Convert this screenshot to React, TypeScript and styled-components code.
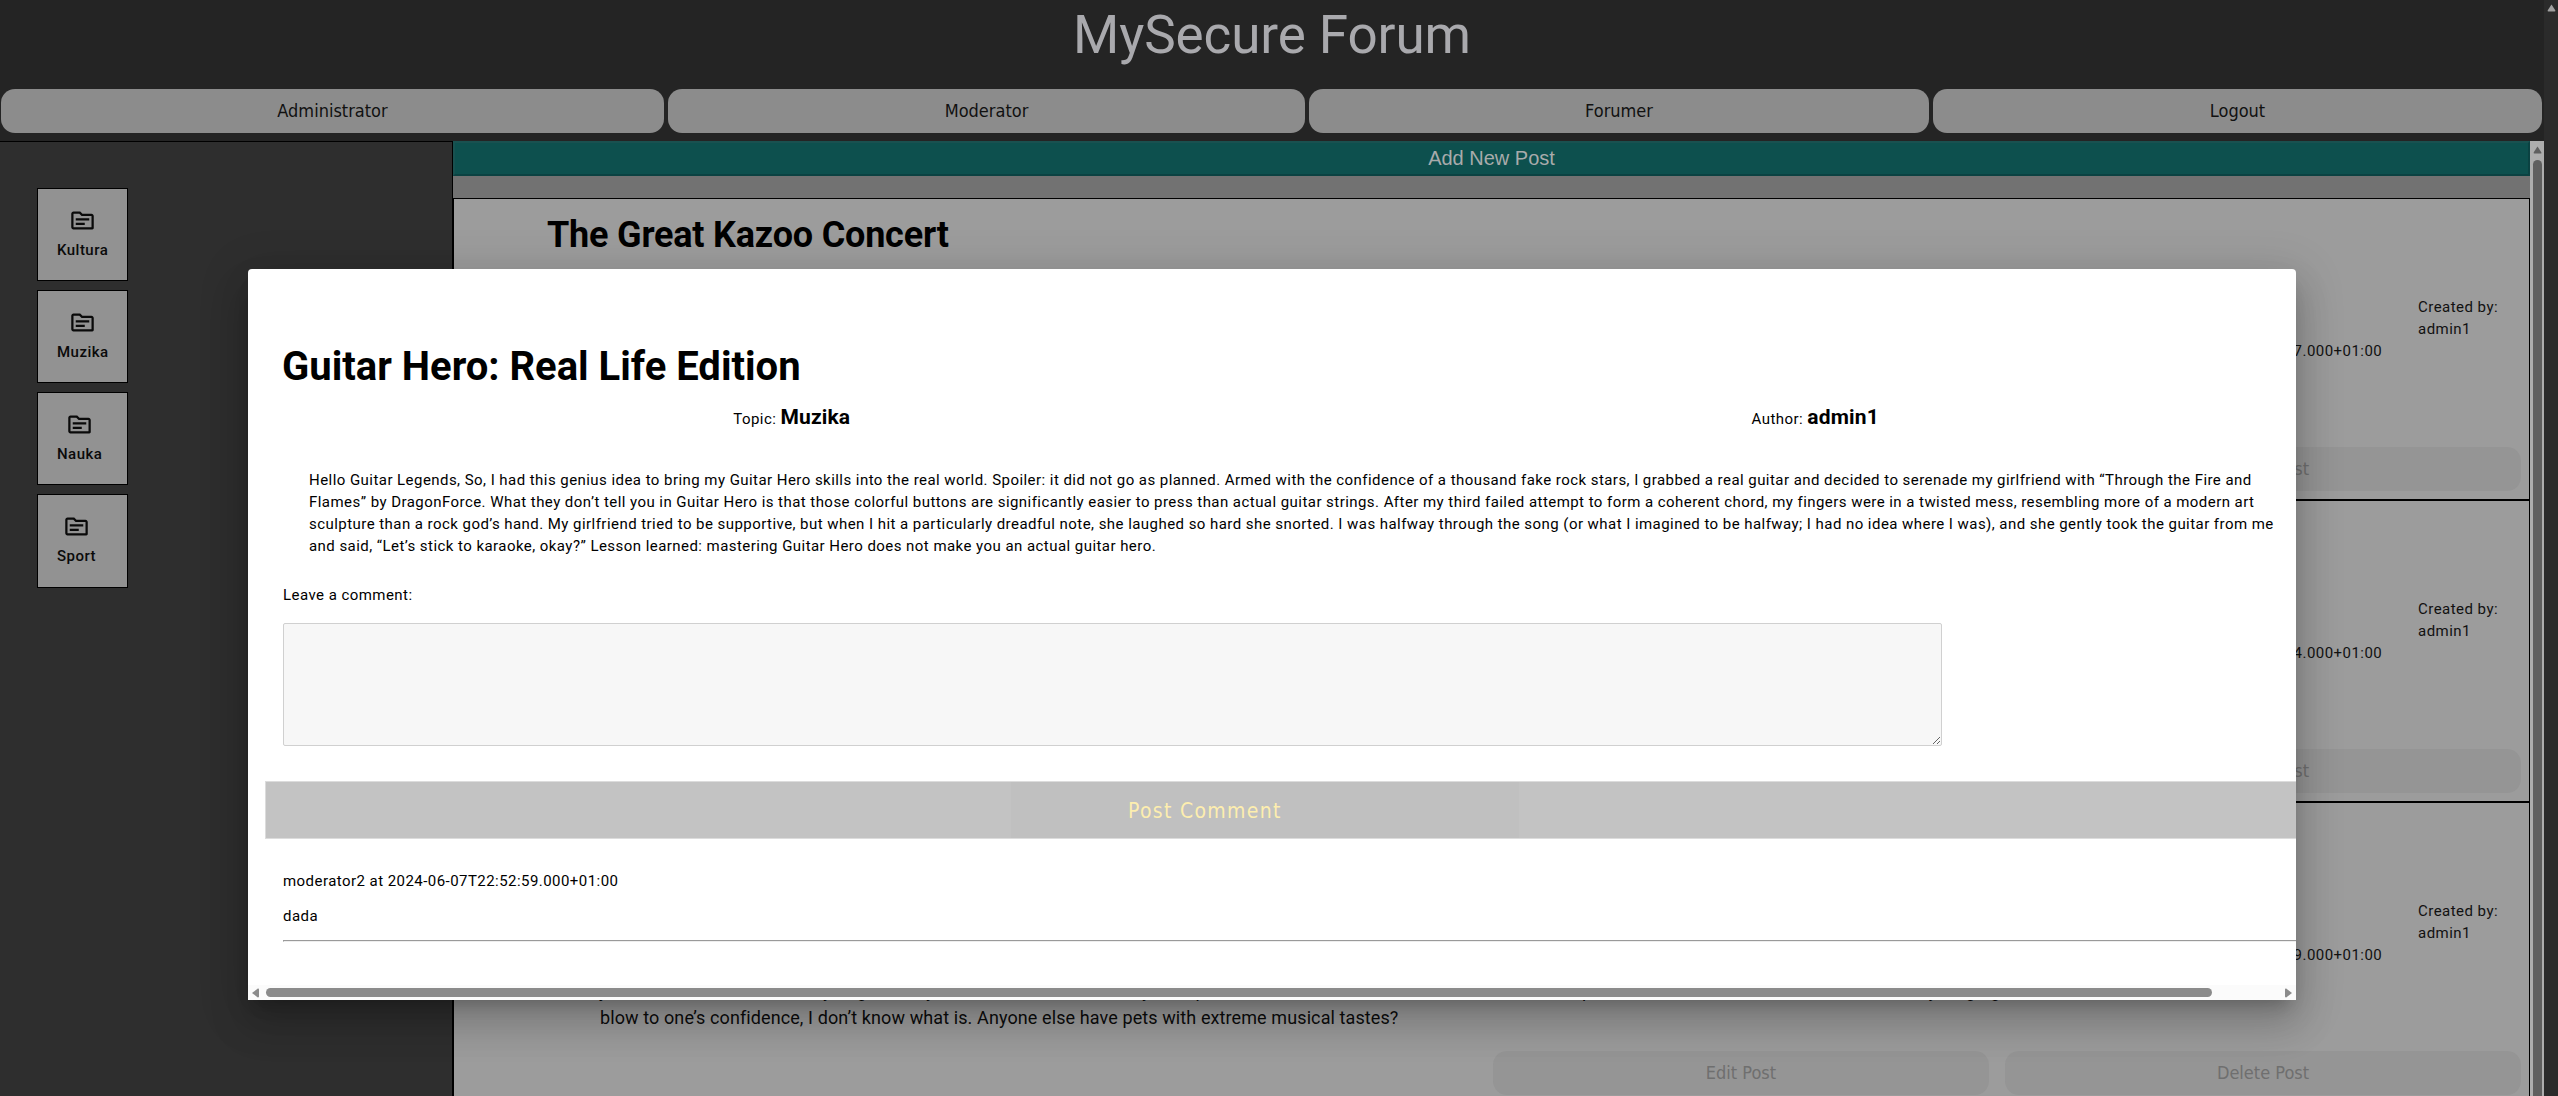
import React from 'react';
import styled, { createGlobalStyle } from 'styled-components';
import { MdOutlineTopic } from 'react-icons/md';

const GlobalStyle = createGlobalStyle`
  *, *::before, *::after { box-sizing: border-box; }
  body {
    margin: 0;
    background: #242424;
    color: #000;
    font-family: Roboto, "Liberation Sans", sans-serif;
    overflow: hidden;
  }
  button { border: 0; padding: 0; margin: 0; }
`;

const navFont = '"DejaVu Sans Condensed", "DejaVu Sans", "Noto Sans", sans-serif';

const Screen = styled.div`
  position: relative;
  display: flex;
  width: 2558px;
  height: 1096px;
  overflow: hidden;
`;

const Page = styled.div`
  width: 2544px;
  display: flex;
  flex-direction: column;
`;

const WindowScroll = styled.div`
  width: 14px;
  background: #2b2b2b;
  padding: 4px 0 0 3px;
`;

const Header = styled.header`
  height: 141px;
  flex: none;
  background: #242424;
  padding-top: 4px;
`;

const SiteTitle = styled.h1`
  margin: 0 0 23px;
  height: 62px;
  line-height: 62px;
  font-size: 53px;
  font-weight: 400;
  letter-spacing: -0.1px;
  text-align: center;
  color: #a9a9ad;
`;

const Nav = styled.nav`
  display: grid;
  grid-template-columns: 663px 637px 620px 609px;
  column-gap: 4px;
  padding-left: 1px;
`;

const NavButton = styled.button`
  height: 44px;
  padding-bottom: 1px;
  border-radius: 14px;
  background: #8c8c8c;
  color: #111;
  font-family: ${navFont};
  font-size: 18px;
  font-stretch: condensed;
`;

const Main = styled.div`
  flex: 1;
  min-height: 0;
  display: flex;
`;

const Sidebar = styled.aside`
  width: 453px;
  flex: none;
  background: #2e2e2e;
  border-top: 1px solid #000;
  border-right: 1px solid #000;
  padding: 45.6px 0 0 37px;
`;

const TopicCard = styled.div`
  width: 91px;
  height: 93.4px;
  margin-bottom: 8.8px;
  border: 1px solid #000;
  background: #929292;
  padding: 18px 0 0 19px;
`;

const TopicInner = styled.div`
  display: inline-flex;
  flex-direction: column;
  align-items: center;
  font-size: 15px;
  font-weight: 500;
  letter-spacing: 0.47px;
  line-height: 22px;
  color: #0a0a0a;
  gap: 5px;
  svg { display: block; }
`;

const Feed = styled.main`
  width: 2077px;
  flex: none;
  background: #727272;
`;

const AddPost = styled.button`
  display: block;
  width: 100%;
  height: 35px;
  margin-bottom: 22px;
  border: 2px solid;
  border-color: #195150 #0b4242 #0b4242 #195150;
  background: #0d504e;
  color: #a8abab;
  font: 20px "Liberation Sans", Arial, sans-serif;
`;

const Post = styled.article`
  height: 302px;
  border: 1px solid #000;
  background: #9c9c9c;
  display: flex;
  flex-direction: column;
`;

const PostTitle = styled.h2`
  margin: 14px 0 0 93px;
  height: 44px;
  font-size: 36px;
  line-height: 44px;
  font-weight: 700;
  letter-spacing: -0.2px;
`;

const PostRow = styled.div`
  flex: 1;
  min-height: 0;
  display: flex;
`;

const PostBody = styled.p`
  margin: 116px 0 0 146px;
  flex: 1;
  min-width: 0;
  font-size: 18px;
  line-height: 27px;
  letter-spacing: 0.1px;
  white-space: pre;
  color: #0c0c0c;
`;

const PostMeta = styled.div<{ $width: number; $top: number }>`
  width: ${p => p.$width}px;
  margin-top: ${p => p.$top}px;
  flex: none;
  font-size: 15px;
  line-height: 22px;
  letter-spacing: 0.47px;
  white-space: pre-line;
  color: #111;
`;

const PostActions = styled.div`
  display: grid;
  grid-template-columns: 496px 516px;
  justify-content: end;
  gap: 16px;
  margin: 0 8px 8px 0;
`;

const GhostButton = styled(NavButton)`
  background: #959595;
  color: #6f6f6f;
`;

const FeedScroll = styled.div`
  width: 14px;
  background: #adadad;
  display: flex;
  flex-direction: column;
  align-items: center;
  padding-top: 5px;
  gap: 6px;
`;

const FeedThumb = styled.div`
  width: 9px;
  flex: 1;
  border-radius: 5px 5px 0 0;
  background: #5f5f5f;
`;

const Arrow = styled.svg`
  display: block;
  flex: none;
`;

const Dialog = styled.section`
  position: absolute;
  left: 248px;
  top: 269px;
  width: 2048px;
  height: 731px;
  display: flex;
  flex-direction: column;
  background: #fff;
  border-radius: 4px 4px 0 0;
  overflow: hidden;
  box-shadow:
    0 11px 15px -7px rgba(0, 0, 0, 0.2),
    0 24px 38px 3px rgba(0, 0, 0, 0.14),
    0 9px 46px 8px rgba(0, 0, 0, 0.12);
`;

const DialogContent = styled.div`
  flex: 1;
  width: 2079px;
  padding: 74px 0 0 35px;
  font-size: 15px;
  line-height: 22px;
  letter-spacing: 0.45px;
`;

const DialogTitle = styled.h1`
  margin: 0 0 0 -1px;
  height: 48px;
  line-height: 48px;
  font-size: 40px;
  font-weight: 700;
  letter-spacing: 0;
`;

const Facts = styled.div`
  display: grid;
  grid-template-columns: 1fr 1fr;
  margin: 8px 0 34px -3px;
  height: 36px;
  line-height: 36px;
  text-align: center;
`;

const Strong = styled.strong`
  font-size: 21px;
  font-weight: 700;
  letter-spacing: 0.15px;
`;

const Story = styled.p`
  margin: 0 0 27px 26px;
  white-space: pre;
`;

const CommentLabel = styled.label`
  display: block;
  margin-bottom: 17px;
`;

const CommentBox = styled.textarea`
  display: block;
  width: 1659px;
  height: 123px;
  border: 1px solid #d0d0d0;
  border-radius: 2px;
  background: #f7f7f7;
  margin-bottom: 35px;
`;

const SubmitButton = styled.button`
  display: block;
  width: 2062px;
  height: 58px;
  margin: 0 0 31px -18px;
  padding: 2px 0 0 862px;
  border: 1px solid #dcdcdc;
  background: linear-gradient(90deg, #c3c3c3 745px, #c0c0c0 745px, #c0c0c0 1253px, #c3c3c3 1253px);
  color: #fdeeaf;
  text-align: left;
  font-family: ${navFont};
  font-size: 21px;
  font-stretch: condensed;
  letter-spacing: 1.3px;
`;

const CommentText = styled.p`
  margin: 0 0 13px;
`;

const Rule = styled.hr`
  margin: 0;
  height: 2px;
  border: 1px solid;
  border-color: #9a9a9a #eee #eee #9a9a9a;
`;

const DialogScroll = styled.div`
  height: 15px;
  background: #fbfbfb;
  display: flex;
  align-items: center;
  padding: 0 4px;
`;

const DialogThumb = styled.div`
  width: 1946px;
  height: 9px;
  margin: 0 auto 0 7px;
  border-radius: 5px;
  background: #8b8b8b;
`;

const topics = ['Kultura', 'Muzika', 'Nauka', 'Sport'];

const story = [
  'Hello Guitar Legends, So, I had this genius idea to bring my Guitar Hero skills into the real world. Spoiler: it did not go as planned. Armed with the confidence of a thousand fake rock stars, I grabbed a real guitar and decided to serenade my girlfriend with “Through the Fire and',
  'Flames” by DragonForce. What they don’t tell you in Guitar Hero is that those colorful buttons are significantly easier to press than actual guitar strings. After my third failed attempt to form a coherent chord, my fingers were in a twisted mess, resembling more of a modern art',
  'sculpture than a rock god’s hand. My girlfriend tried to be supportive, but when I hit a particularly dreadful note, she laughed so hard she snorted. I was halfway through the song (or what I imagined to be halfway; I had no idea where I was), and she gently took the guitar from me',
  'and said, “Let’s stick to karaoke, okay?” Lesson learned: mastering Guitar Hero does not make you an actual guitar hero.',
].join('\n');

const petBody = [
  'just when I hit the chorus my dog actually hid behind the kitchen. My cat opened the window and ran outside to call for help the moment he heard the first notes of my singing. If that isn’t a',
  'blow to one’s confidence, I don’t know what is. Anyone else have pets with extreme musical tastes?',
].join('\n');

const posts = [
  { title: 'The Great Kazoo Concert', date: '2024-06-07T22:50:17.000+01:00', body: '' },
  { title: '', date: '2024-06-07T22:50:54.000+01:00', body: '' },
  { title: '', date: '2024-06-07T22:51:39.000+01:00', body: petBody },
];

const UpArrow = ({ fill }: { fill: string }) => (
  <Arrow width={9} height={8} viewBox="0 0 9 8">
    <path d="M4.5 0.5 L8.4 6.6 Q8.6 7.5 7.6 7.5 H1.4 Q0.4 7.5 0.6 6.6 Z" fill={fill} />
  </Arrow>
);

const SideArrow = ({ flip }: { flip?: boolean }) => (
  <Arrow width="7" height="10" viewBox="0 0 7 10">
    <path
      d={flip ? 'M7 5 L1.2 9.4 Q0 9.6 0 8.6 V1.4 Q0 .4 1.2 .6 Z' : 'M0 5 L5.8 .6 Q7 .4 7 1.4 V8.6 Q7 9.6 5.8 9.4 Z'}
      fill="#8b8b8b"
    />
  </Arrow>
);

export default function App() {
  return (
    <>
      <GlobalStyle />
      <Screen>
        <Page>
          <Header>
            <SiteTitle>MySecure Forum</SiteTitle>
            <Nav>
              {['Administrator', 'Moderator', 'Forumer', 'Logout'].map(n => (
                <NavButton key={n}>{n}</NavButton>
              ))}
            </Nav>
          </Header>
          <Main>
            <Sidebar>
              {topics.map(t => (
                <TopicCard key={t}>
                  <TopicInner>
                    <MdOutlineTopic size={27} />
                    {t}
                  </TopicInner>
                </TopicCard>
              ))}
            </Sidebar>
            <Feed>
              <AddPost>Add New Post</AddPost>
              {posts.map(p => (
                <Post key={p.date}>
                  <PostTitle>{p.title}</PostTitle>
                  <PostRow>
                    <PostBody>{p.body}</PostBody>
                    <PostMeta $width={267} $top={83}>{p.date}</PostMeta>
                    <PostMeta $width={111} $top={39}>{'Created by:\nadmin1'}</PostMeta>
                  </PostRow>
                  <PostActions>
                    <GhostButton>Edit Post</GhostButton>
                    <GhostButton>Delete Post</GhostButton>
                  </PostActions>
                </Post>
              ))}
            </Feed>
            <FeedScroll>
              <UpArrow fill="#5f5f5f" />
              <FeedThumb />
            </FeedScroll>
          </Main>
        </Page>
        <WindowScroll>
          <UpArrow fill="#a0a0a0" />
        </WindowScroll>
        <Dialog>
          <DialogContent>
            <DialogTitle>Guitar Hero: Real Life Edition</DialogTitle>
            <Facts>
              <div>Topic: <Strong>Muzika</Strong></div>
              <div>Author: <Strong>admin1</Strong></div>
            </Facts>
            <Story>{story}</Story>
            <CommentLabel>Leave a comment:</CommentLabel>
            <CommentBox />
            <SubmitButton>Post Comment</SubmitButton>
            <CommentText>moderator2 at 2024-06-07T22:52:59.000+01:00</CommentText>
            <CommentText>dada</CommentText>
            <Rule />
          </DialogContent>
          <DialogScroll>
            <SideArrow />
            <DialogThumb />
            <SideArrow flip />
          </DialogScroll>
        </Dialog>
      </Screen>
    </>
  );
}
